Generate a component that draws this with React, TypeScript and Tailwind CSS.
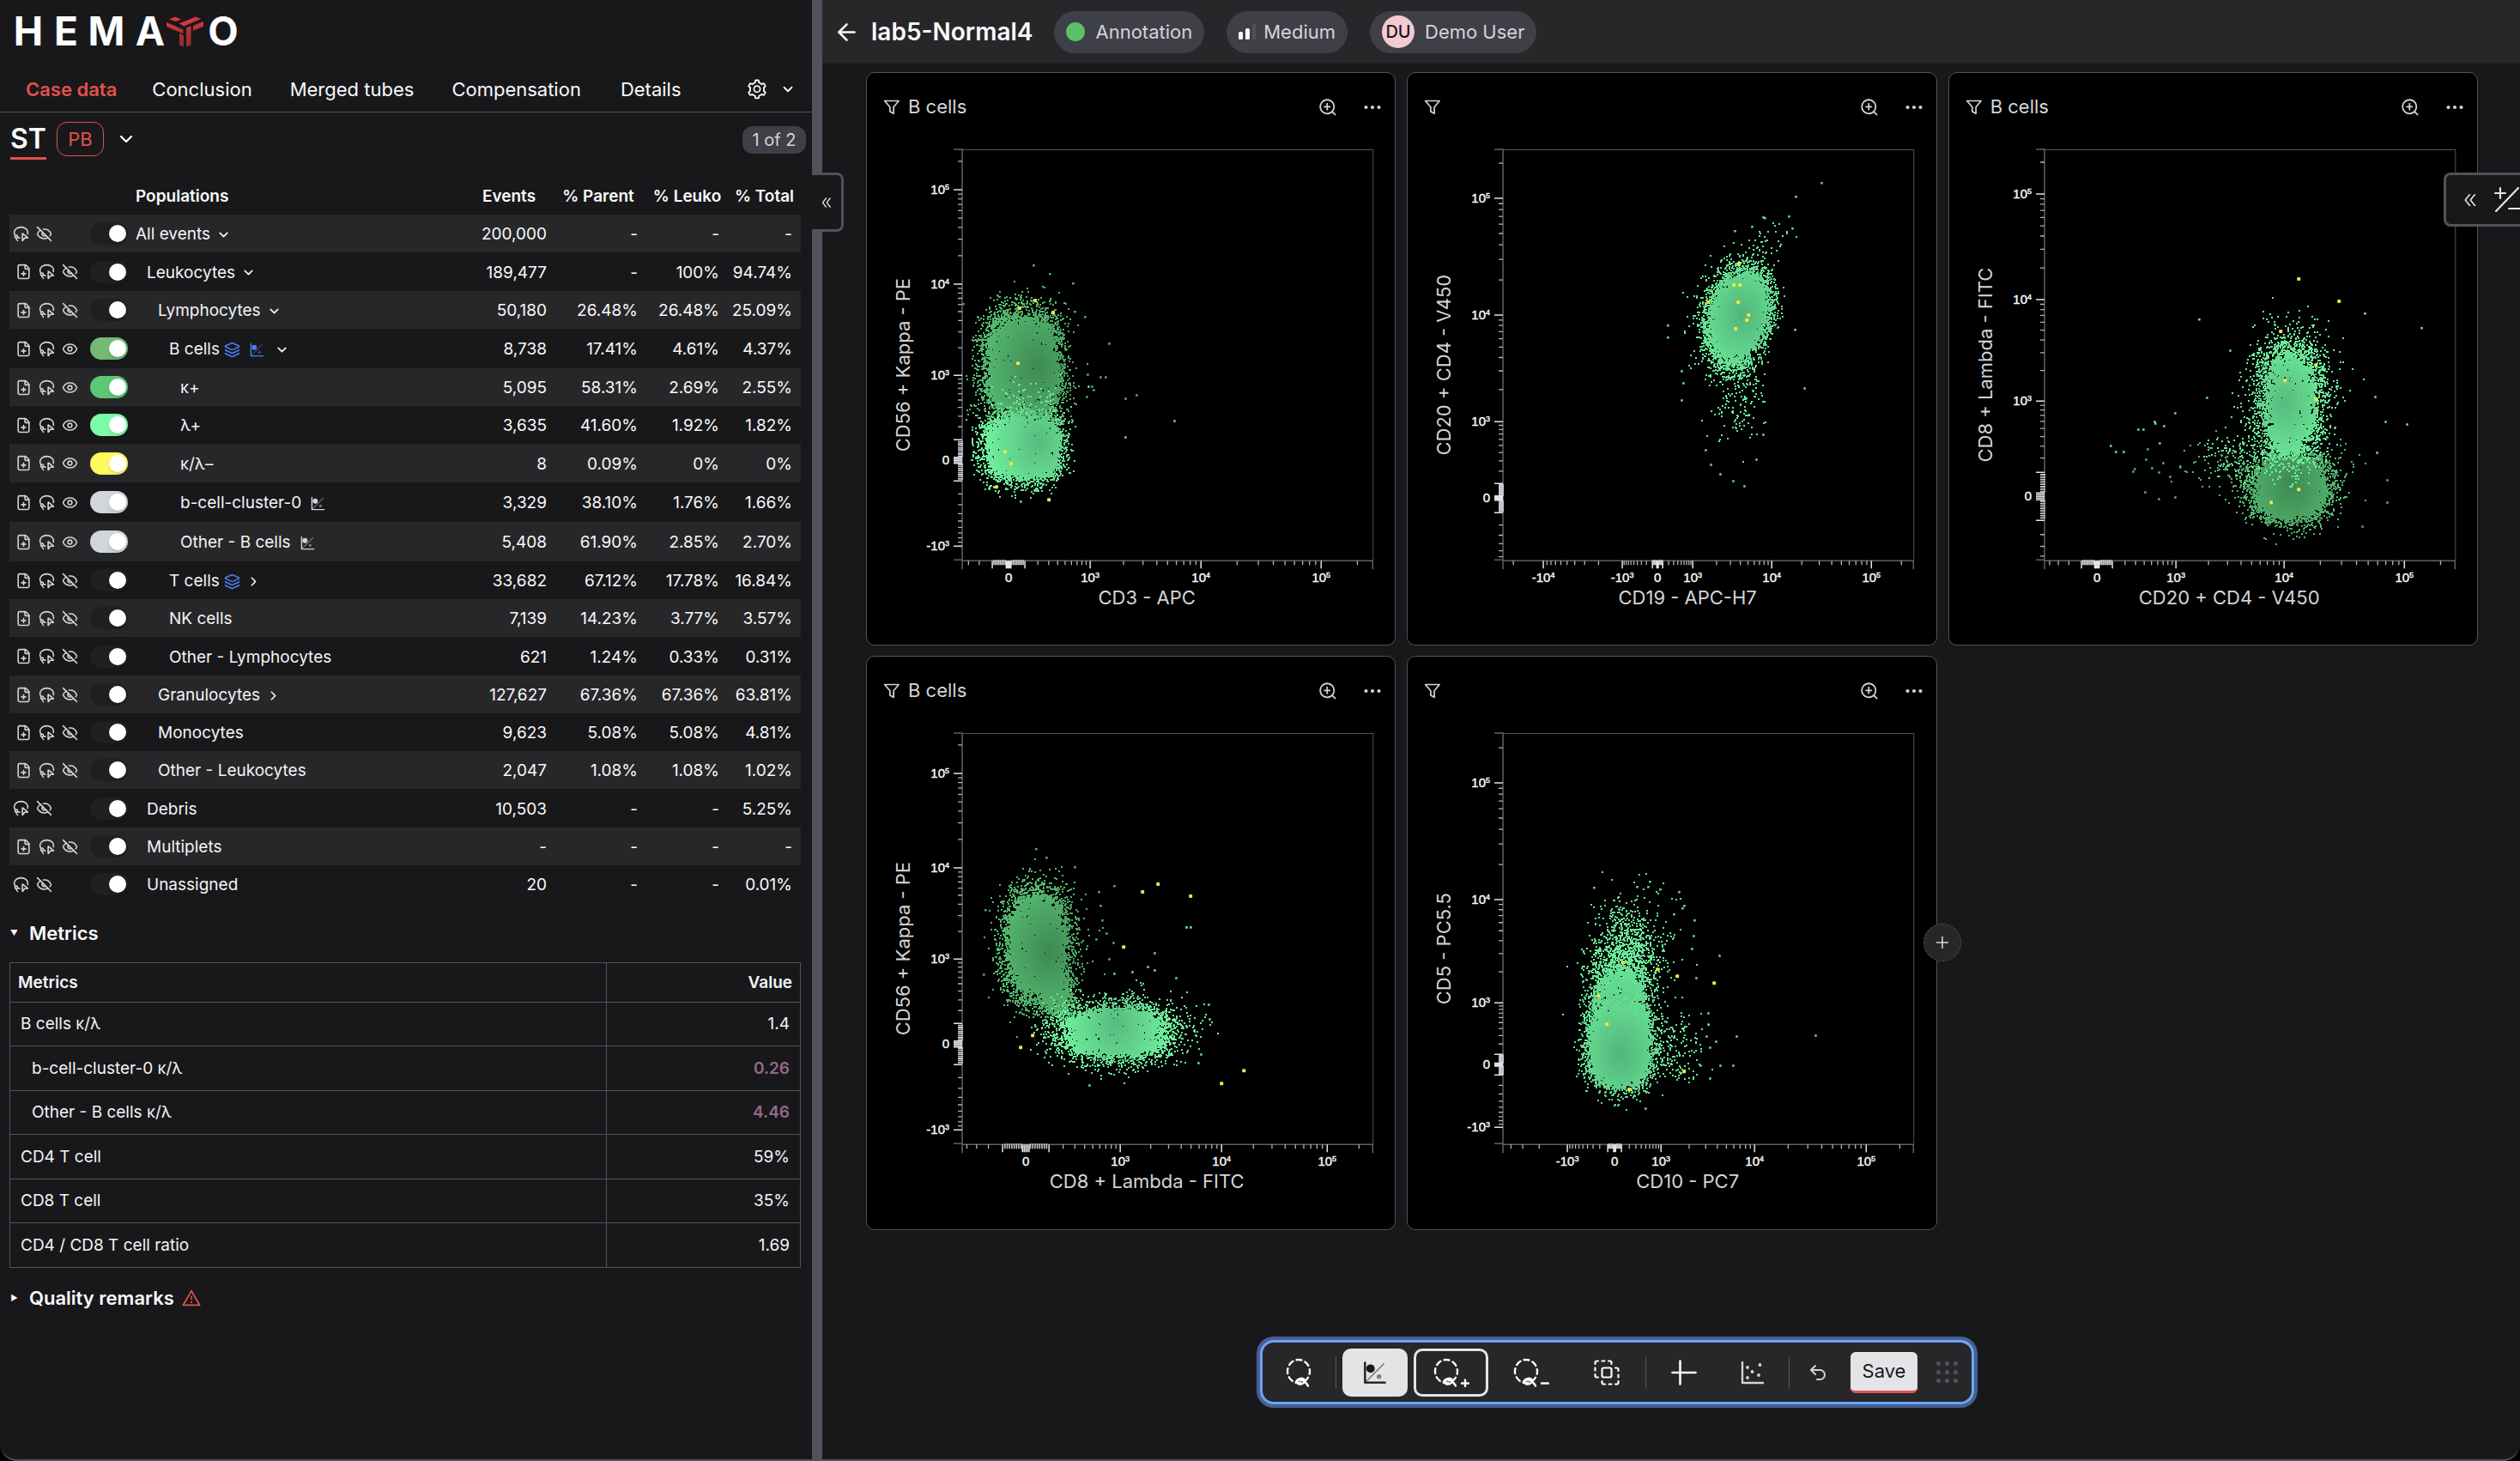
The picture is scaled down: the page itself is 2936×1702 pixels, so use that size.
import React from "react";
import { ArrowLeft, ChevronDown, ChevronRight, Eye, EyeOff, FilePlus, LassoSelect, Layers, Undo2 } from "lucide-react";
import { AiOutlineDoubleLeft, AiOutlineSetting, AiOutlineWarning, AiOutlineZoomIn } from "react-icons/ai";

/* ---------- icons ---------- */

function GateIcon({ className }: { className: string }) {
  return (
    <svg viewBox="0 0 24 24" className={className} fill="none" stroke="currentColor" aria-hidden="true">
      <path d="M2 2v20h20" strokeWidth="2" strokeLinecap="round" strokeLinejoin="round" />
      <path d="M3 21 21 3" strokeWidth="1.5" opacity="0.5" />
      <circle cx="7.500" cy="8" r="4.200" fill="currentColor" stroke="none" />
      <circle cx="16" cy="16" r="2.300" fill="currentColor" stroke="none" opacity="0.5" />
    </svg>
  );
}

function FunnelIcon() {
  return (
    <svg viewBox="0 0 20 20" className="size-5" fill="none" stroke="currentColor" strokeWidth="1.700" strokeLinejoin="round" aria-hidden="true">
      <path d="M1.700 2.500h16.400l-6 7.300v7.500l-4.200-2.200V9.800z" />
    </svg>
  );
}

function DotsIcon() {
  return (
    <svg viewBox="0 0 24 24" className="size-6" fill="currentColor" aria-hidden="true">
      <circle cx="4.500" cy="12" r="2.100" />
      <circle cx="12" cy="12" r="2.100" />
      <circle cx="19.500" cy="12" r="2.100" />
    </svg>
  );
}

function LassoIcon({ sign }: { sign?: "+" | "-" }) {
  return (
    <svg
      viewBox={sign ? "0 0 42 34" : "0 0 30 34"}
      className={sign ? "h-[34px] w-[42px]" : "h-[34px] w-[30px]"}
      fill="none"
      stroke="currentColor"
      strokeWidth="2.400"
      strokeLinecap="round"
      aria-hidden="true"
    >
      <ellipse cx="15" cy="15.500" rx="13" ry="13.500" strokeDasharray="6.500 4.800" strokeDashoffset="3" pathLength="90" />
      <path d="M12 28.500c0-3.500 7-6.500 9.500-3.500 2 3-2 6-5.500 5.500-4-.5-3.500-5 .5-5 5 0 7 3 9.500 7" />
      {sign && <path d="M33 29.500h8" />}
      {sign === "+" && <path d="M37 25.500v8" />}
    </svg>
  );
}

function BoxesIcon() {
  return (
    <svg viewBox="0 0 30 30" className="size-[30px]" fill="none" stroke="currentColor" strokeWidth="2.200" strokeLinecap="round" aria-hidden="true">
      <rect x="9.500" y="9.500" width="11" height="11" rx="2" />
      <path d="M1.500 5V3.500a2 2 0 0 1 2-2H5M9.500 1.500h3M17 1.500h1.500a2 2 0 0 1 2 2V5M1.500 9.500v3M1.500 17v1.500a2 2 0 0 0 2 2H5" />
      <path d="M25 9.500h1.500a2 2 0 0 1 2 2V13M28.500 17.500v3M28.500 25v1.500a2 2 0 0 1-2 2H25M20.500 28.500h-3M13 28.500h-1.500a2 2 0 0 1-2-2V25" />
    </svg>
  );
}

function ScatterIcon() {
  return (
    <svg viewBox="0 0 28 28" className="size-7 text-zinc-300" fill="none" stroke="currentColor" aria-hidden="true">
      <path d="M2 2v24h24" strokeWidth="2.400" strokeLinecap="round" strokeLinejoin="round" />
      <g fill="currentColor" stroke="none">
        <circle cx="8" cy="8" r="1.900" />
        <circle cx="22.500" cy="5" r="1.900" />
        <circle cx="13.500" cy="13" r="1.900" />
        <circle cx="21" cy="17" r="1.900" />
        <circle cx="8" cy="20" r="1.900" />
      </g>
    </svg>
  );
}

function Logo() {
  return (
    <svg viewBox="-6 -12 284 60" className="h-[60px] w-[284px]" role="img" aria-label="Hemato">
      <g fill="#ffffff" fontFamily="Inter, sans-serif" fontSize="46" fontWeight="700" textAnchor="middle">
        <text x="18" y="34">H</text>
        <text x="62" y="34">E</text>
        <text x="109" y="34">M</text>
        <text x="160" y="34">A</text>
        <text x="245" y="34">O</text>
      </g>
      <defs>
        <linearGradient id="mark" x1="0" y1="0" x2="0" y2="1">
          <stop offset="0" stopColor="#dc3640" />
          <stop offset="1" stopColor="#a03030" />
        </linearGradient>
        <linearGradient id="stem" gradientUnits="userSpaceOnUse" x1="0" y1="8" x2="0" y2="36">
          <stop offset="0" stopColor="#c4363c" />
          <stop offset="1" stopColor="#8a3026" />
        </linearGradient>
      </defs>
      <path d="M182 3.500l7-3 7 3-6 2.500z" fill="#dc3640" />
      <path d="M193.500 8.500 213 .5l6 2.500-19.500 8.500z" fill="#d83740" />
      <path d="M179 7v5l19.500 8.500v-5z" fill="url(#mark)" />
      <path d="M222 6v6l-12 5v-6z" fill="url(#mark)" />
      <path d="M202 13.500l5.500-2.500v22.500l-5.500 2z" fill="url(#stem)" />
      <path d="M194 20l5 2.500v13l-5-2z" fill="url(#stem)" />
    </svg>
  );
}

/* ---------- populations ---------- */

type Row = {
  name: string;
  depth: number;
  values: [string, string, string, string];
  height: string;
  file?: boolean;
  color?: string;
  layers?: boolean;
  gate?: "blue" | "gray";
  arrow?: "down" | "right";
};

const INDENT = ["pl-0", "pl-[13px]", "pl-[26px]", "pl-[39px]", "pl-[52px]"];

const ROWS: Row[] = [
  { name: "All events", depth: 0, values: ["200,000", "-", "-", "-"], height: "h-11", arrow: "down" },
  { name: "Leukocytes", depth: 1, values: ["189,477", "-", "100%", "94.74%"], height: "h-[45px]", file: true, arrow: "down" },
  { name: "Lymphocytes", depth: 2, values: ["50,180", "26.48%", "26.48%", "25.09%"], height: "h-11", file: true, arrow: "down" },
  { name: "B cells", depth: 3, values: ["8,738", "17.41%", "4.61%", "4.37%"], height: "h-[46px]", file: true, color: "bg-[#74b976]", layers: true, gate: "blue", arrow: "down" },
  { name: "κ+", depth: 4, values: ["5,095", "58.31%", "2.69%", "2.55%"], height: "h-11", file: true, color: "bg-[#5bc777]" },
  { name: "λ+", depth: 4, values: ["3,635", "41.60%", "1.92%", "1.82%"], height: "h-11", file: true, color: "bg-[#7dfca8]" },
  { name: "κ/λ–", depth: 4, values: ["8", "0.09%", "0%", "0%"], height: "h-[45px]", file: true, color: "bg-[#fffa5c]" },
  { name: "b-cell-cluster-0", depth: 4, values: ["3,329", "38.10%", "1.76%", "1.66%"], height: "h-[46px]", file: true, color: "bg-gray-300", gate: "gray" },
  { name: "Other - B cells", depth: 4, values: ["5,408", "61.90%", "2.85%", "2.70%"], height: "h-[46px]", file: true, color: "bg-gray-300", gate: "gray" },
  { name: "T cells", depth: 3, values: ["33,682", "67.12%", "17.78%", "16.84%"], height: "h-11", file: true, layers: true, arrow: "right" },
  { name: "NK cells", depth: 3, values: ["7,139", "14.23%", "3.77%", "3.57%"], height: "h-11", file: true },
  { name: "Other - Lymphocytes", depth: 3, values: ["621", "1.24%", "0.33%", "0.31%"], height: "h-[45px]", file: true },
  { name: "Granulocytes", depth: 2, values: ["127,627", "67.36%", "67.36%", "63.81%"], height: "h-11", file: true, arrow: "right" },
  { name: "Monocytes", depth: 2, values: ["9,623", "5.08%", "5.08%", "4.81%"], height: "h-11", file: true },
  { name: "Other - Leukocytes", depth: 2, values: ["2,047", "1.08%", "1.08%", "1.02%"], height: "h-11", file: true },
  { name: "Debris", depth: 1, values: ["10,503", "-", "-", "5.25%"], height: "h-[45px]" },
  { name: "Multiplets", depth: 1, values: ["-", "-", "-", "-"], height: "h-11", file: true },
  { name: "Unassigned", depth: 1, values: ["20", "-", "-", "0.01%"], height: "h-11" },
];

function PopulationRow({ row }: { row: Row }) {
  return (
    <tr className={`odd:bg-zinc-800 ${row.height}`}>
      <td className="p-0">
        <div className={`flex items-center gap-2 text-zinc-300 ${row.file ? "pl-[7px]" : "pl-1"}`}>
          {row.file && (
            <button aria-label={`Add ${row.name} to report`}>
              <FilePlus className="size-[19px]" strokeWidth={2} />
            </button>
          )}
          <button aria-label={`Select ${row.name}`}>
            <LassoSelect className="size-[19px]" strokeWidth={2} />
          </button>
          <button aria-label={`Toggle visibility of ${row.name}`}>
            {row.color ? <Eye className="size-[19px]" strokeWidth={2} /> : <EyeOff className="size-[19px]" strokeWidth={2} />}
          </button>
        </div>
      </td>
      <td className="p-0">
        <input
          type="checkbox"
          role="switch"
          defaultChecked={!!row.color}
          aria-label={`Colour ${row.name}`}
          className={`block h-[26px] w-11 appearance-none rounded-full before:mt-[3px] before:ml-[22px] before:block before:size-5 before:rounded-full before:bg-white before:shadow-md ${row.color ?? "bg-[#202021]"}`}
        />
      </td>
      <td className="p-0 pt-[2px]">
        <div className={`flex items-center text-zinc-100 ${INDENT[row.depth]}`}>
          <span>{row.name}</span>
          {row.layers && <Layers className="ml-[5px] size-[19px] text-[#4a7df0]" strokeWidth={2} />}
          {row.gate && <GateIcon className={`ml-[11px] size-[17px] ${row.gate === "blue" ? "text-[#4a7df0]" : "text-zinc-300"}`} />}
          {row.arrow && (
            <button aria-label={`Expand ${row.name}`} className={row.gate ? "ml-3" : "ml-[7px]"}>
              {row.arrow === "down" ? <ChevronDown className="size-[17px]" strokeWidth={2.4} /> : <ChevronRight className="size-[17px]" strokeWidth={2.4} />}
            </button>
          )}
        </div>
      </td>
      {row.values.map((v, i) => (
        <td key={i} className="p-0 pt-[2px] pr-[10px] text-right text-zinc-50">
          {v}
        </td>
      ))}
    </tr>
  );
}

function Populations() {
  return (
    <table className="w-full table-fixed border-collapse text-[19px] leading-6">
      <colgroup>
        <col className="w-[94px]" />
        <col className="w-[53px]" />
        <col />
        <col className="w-[108px]" />
        <col className="w-[106px]" />
        <col className="w-[95px]" />
        <col className="w-[85px]" />
      </colgroup>
      <thead>
        <tr className="h-11 text-zinc-50">
          <td />
          <td />
          <th scope="col" className="p-0 pt-[2px] text-left font-semibold">Populations</th>
          <th scope="col" className="p-0 pt-[2px] font-semibold">Events</th>
          <th scope="col" className="p-0 pt-[2px] pr-[6px] font-semibold">% Parent</th>
          <th scope="col" className="p-0 pt-[2px] font-semibold">% Leuko</th>
          <th scope="col" className="p-0 pt-[2px] font-semibold">% Total</th>
        </tr>
      </thead>
      <tbody>
        {ROWS.map((r) => (
          <PopulationRow key={r.name} row={r} />
        ))}
      </tbody>
    </table>
  );
}

/* ---------- metrics ---------- */

const METRICS = [
  { name: "B cells κ/λ", value: "1.4" },
  { name: "b-cell-cluster-0 κ/λ", value: "0.26", nested: true },
  { name: "Other - B cells κ/λ", value: "4.46", nested: true },
  { name: "CD4 T cell", value: "59%" },
  { name: "CD8 T cell", value: "35%" },
  { name: "CD4 / CD8 T cell ratio", value: "1.69" },
];

function Metrics() {
  return (
    <table className="w-full table-fixed border-collapse border border-zinc-600 text-[19px] leading-6 text-zinc-100">
      <colgroup>
        <col />
        <col className="w-[226px]" />
      </colgroup>
      <thead>
        <tr className="h-[46px]">
          <th scope="col" className="border border-zinc-600 px-[9px] py-0 text-left font-semibold">Metrics</th>
          <th scope="col" className="border border-zinc-600 px-[9px] py-0 text-right font-semibold">Value</th>
        </tr>
      </thead>
      <tbody>
        {METRICS.map((m) => (
          <tr key={m.name} className="h-[52px] odd:h-[51px]">
            <td className={`border border-zinc-600 py-0 ${m.nested ? "pl-[25px]" : "pl-3"}`}>{m.name}</td>
            <td className={`border border-zinc-600 px-3 py-0 text-right ${m.nested ? "font-semibold text-[#96688c]" : ""}`}>{m.value}</td>
          </tr>
        ))}
      </tbody>
    </table>
  );
}

/* ---------- sidebar ---------- */

function Sidebar() {
  return (
    <aside className="min-w-0">
      <div className="h-[76px] pt-[7px] pl-[9px]">
        <Logo />
      </div>
      <nav className="flex h-[55px] items-center border-b border-zinc-600 pt-[2px] pr-[19px] pl-[30px] text-[22px] text-zinc-50">
        <a href="#case" className="font-semibold text-[#e2514b]">Case data</a>
        <a href="#conclusion" className="ml-[41px]">Conclusion</a>
        <a href="#tubes" className="ml-11">Merged tubes</a>
        <a href="#compensation" className="ml-11">Compensation</a>
        <a href="#details" className="ml-[46px]">Details</a>
        <button aria-label="Settings" className="ml-auto flex items-center gap-[14px]">
          <AiOutlineSetting className="size-[26px]" />
          <ChevronDown className="size-[18px]" strokeWidth={2.4} />
        </button>
      </nav>
      <div className="flex h-[75px] items-start pt-[11px] pr-[7px] pl-3">
        <h2 className="h-11 border-b-3 border-[#e2514b] text-[32px] leading-10 font-semibold text-white">ST</h2>
        <button className="ml-3 flex items-center">
          <span className="flex h-10 w-[55px] items-center justify-center rounded-xl border border-[#e2514b] text-[22px] text-[#e2514b]">PB</span>
          <ChevronDown className="ml-[14px] size-6 text-zinc-50" strokeWidth={2.3} />
        </button>
        <span className="mt-[5px] ml-auto flex h-8 w-[74px] items-center justify-center rounded-xl bg-zinc-700 text-[20px] text-zinc-300">1 of 2</span>
      </div>
      <div className="pr-[13px] pl-[11px]">
        <Populations />
        <details open className="pt-[19px]">
          <summary className="flex h-8 list-none items-center gap-3 text-[22px] font-semibold text-zinc-50">
            <span className="w-[11px] text-center text-[9px]">▼</span>Metrics
          </summary>
          <div className="pt-[18px]">
            <Metrics />
          </div>
        </details>
        <details className="pt-[19px]">
          <summary className="flex h-8 list-none items-center gap-3 text-[22px] font-semibold text-zinc-50">
            <span className="w-[11px] text-center text-[9px]">▶</span>
            <span className="flex items-center gap-2">
              Quality remarks
              <AiOutlineWarning className="size-6 text-[#e2514b]" />
            </span>
          </summary>
        </details>
      </div>
    </aside>
  );
}

/* ---------- plots ---------- */

type Axis = {
  title: string;
  zero: number;
  /* pixel positions of 100, 10³, 10⁴, 10⁵ and, where labelled, -10³ and -10⁴ */
  h: number;
  k1: number;
  k4: number;
  k5: number;
  nk1?: number;
  nk4?: number;
};

type Tone = "kappa" | "lambda" | "mix";

type Cluster = {
  n: number;
  x: number;
  y: number;
  rx: number;
  ry: number;
  sx: number;
  sy: number;
  p?: number;
  tilt?: number;
  dark?: [number, number, number];
  tone: Tone;
};

type Plot = {
  label?: string;
  xAxis: Axis;
  yAxis: Axis;
  clusters: Cluster[];
  dots: { tone: Tone; at: [number, number][] }[];
  marked: [number, number][];
};

const LEFT = 112;
const RIGHT = 590;
const TOP = 90;
const BOTTOM = 569;

const TONES: Record<Tone, [number[], number[]]> = {
  kappa: [[64, 140, 84], [84, 184, 112]],
  lambda: [[88, 190, 128], [110, 238, 156]],
  mix: [[84, 184, 125], [106, 232, 152]],
};
const LEVELS = 12;

function shade(tone: Tone, level: number) {
  const [a, b] = TONES[tone];
  const t = level / (LEVELS - 1);
  return `rgb(${a.map((v, i) => Math.round(v + (b[i] - v) * t)).join(",")})`;
}

function makeRandom(seed: number) {
  let s = seed;
  return () => {
    s = (s + 0x6d2b79f5) | 0;
    let t = Math.imul(s ^ (s >>> 15), 1 | s);
    t = (t + Math.imul(t ^ (t >>> 7), 61 | t)) ^ t;
    return ((t ^ (t >>> 14)) >>> 0) / 4294967296;
  };
}

function clusterPaths(c: Cluster, rand: () => number) {
  const gauss = () => Math.sqrt(-2 * Math.log(1 - rand())) * Math.cos(2 * Math.PI * rand());
  const p = c.p ?? 2;
  const paths: string[] = Array(LEVELS).fill("");
  for (let i = 0; i < c.n; i++) {
    let u = 0;
    let v = 0;
    do {
      u = rand() * 2 - 1;
      v = rand() * 2 - 1;
    } while (Math.abs(u) ** p + Math.abs(v) ** p > 1);
    const dx = u * c.rx + gauss() * c.sx;
    const dy = v * c.ry + gauss() * c.sy;
    const x = Math.round(c.x + dx - dy * (c.tilt ?? 0));
    const y = Math.round(c.y + dy);
    if (x < LEFT + 1 || x > RIGHT - 3 || y < TOP + 1 || y > BOTTOM - 3) continue;
    const level = c.dark
      ? Math.min(LEVELS - 1, Math.floor((Math.hypot(x - c.dark[0], (y - c.dark[1]) * 0.75) / c.dark[2]) * LEVELS))
      : LEVELS - 1;
    const core = c.dark && Math.abs(dx / c.rx) ** p + Math.abs(dy / c.ry) ** p < 0.5 + rand() * 0.7;
    paths[level] += core ? `M${x} ${y}h3v3h-3z` : `M${x} ${y}h2v2h-2z`;
  }
  return paths;
}

function axisTicks(a: Axis, lo: number, hi: number) {
  const minor: number[] = [];
  const dense: number[] = [];
  const major: number[] = [];
  const half = Math.abs(a.h - a.zero);
  const nh = 2 * a.zero - a.h;
  const nk1 = a.nk1 ?? 2 * a.zero - a.k1;
  const nk4 = a.nk4 ?? nk1 - (a.k4 - a.k1);
  const C = 257;
  const frac = (m: number) => (Math.asinh((m * 100) / C) - Math.asinh(100 / C)) / (Math.asinh(1000 / C) - Math.asinh(100 / C));
  for (let m = 2; m < 10; m++) {
    minor.push(a.h + (a.k1 - a.h) * frac(m));
    minor.push(nh + (nk1 - nh) * frac(m));
    minor.push(a.k1 + (a.k4 - a.k1) * Math.log10(m));
    minor.push(a.k4 + (a.k5 - a.k4) * Math.log10(m));
    minor.push(a.k5 + (a.k5 - a.k4) * Math.log10(m));
    minor.push(nk1 + (nk4 - nk1) * Math.log10(m));
    minor.push(nk4 - (a.k5 - a.k4) * Math.log10(m));
    dense.push(a.zero + (half * m) / 10, a.zero - (half * m) / 10);
  }
  major.push(a.h, nh, a.k1, a.k4, a.k5, a.zero, nk1, nk4);
  for (let m = 1; m <= 2; m++) major.push(a.zero + (half * m) / 14, a.zero - (half * m) / 14);
  const inside = (v: number) => v > lo && v < hi;
  return { minor: minor.filter(inside), dense: dense.filter(inside), major: major.filter(inside) };
}

function TickLabel({ x, y, power, negative, end }: { x: number; y: number; power?: number; negative?: boolean; end?: boolean }) {
  return (
    <text x={x} y={y} textAnchor={end ? "end" : "middle"} fontSize="15" fill="#fafafa" stroke="#fafafa" strokeWidth="0.4" fontFamily="'Liberation Sans', Arial, sans-serif">
      {power === undefined ? "0" : `${negative ? "-" : ""}10`}
      {power !== undefined && (
        <tspan fontSize="9" dy="-5">
          {power}
        </tspan>
      )}
    </text>
  );
}

function PlotDrawing({ plot, seed }: { plot: Plot; seed: number }) {
  const rand = makeRandom(seed);
  const { xAxis, yAxis } = plot;
  const xt = axisTicks(xAxis, LEFT, RIGHT);
  const yt = axisTicks(yAxis, TOP, BOTTOM);
  return (
    <svg viewBox="1 81 615 586" className="block w-full" role="img" aria-label={`${xAxis.title} against ${yAxis.title}`}>
      {plot.dots.map((d, i) => (
        <path key={`d${i}`} fill={shade(d.tone, LEVELS - 2)} d={d.at.map(([x, y]) => `M${x - 1} ${y - 1}h2.500v2.500h-2.500z`).join("")} />
      ))}
      {plot.clusters.map((c, i) =>
        clusterPaths(c, rand)
          .map((d, level) => ({ d, level }))
          .reverse()
          .map(({ d, level }) => <path key={`${i}-${level}`} fill={shade(c.tone, level)} d={d} shapeRendering="crispEdges" />),
      )}
      {plot.marked.map(([x, y], i) => (
        <rect key={i} x={x - 2} y={y - 2} width="4" height="4" rx="1" fill="#f2e63c" />
      ))}
      <path d={`M${LEFT} ${TOP + 0.5}H${RIGHT + 0.5}V${BOTTOM}`} fill="none" stroke="#52525b" />
      <path d={`M${LEFT - 10} ${TOP}H${LEFT}V${BOTTOM}M${LEFT - 10} ${BOTTOM - 1}H${LEFT}M${LEFT} ${BOTTOM + 10}V${BOTTOM}H${RIGHT}v10`} fill="none" stroke="#606064" strokeWidth="1.500" />
      <path d={yt.minor.map((v) => `M${LEFT - 5} ${v}h5`).join("")} stroke="#b4b4ba" strokeWidth="1.300" />
      <path d={xt.minor.map((v) => `M${v} ${BOTTOM}v5`).join("")} stroke="#b4b4ba" strokeWidth="1.300" />
      <path d={yt.dense.map((v) => `M${LEFT - 5} ${v}h6`).join("")} stroke="#c4c4ca" strokeWidth="1.800" />
      <path d={xt.dense.map((v) => `M${v} ${BOTTOM - 1}v6`).join("")} stroke="#c4c4ca" strokeWidth="1.600" />
      <path d={yt.major.map((v) => `M${LEFT - 10} ${v}h10`).join("")} stroke="#e4e4e7" strokeWidth="1.500" />
      <path d={xt.major.map((v) => `M${v} ${BOTTOM}v9`).join("")} stroke="#e4e4e7" strokeWidth="1.500" />
      <TickLabel x={97} y={yAxis.zero + 5} end />
      <TickLabel x={97} y={yAxis.k1 + 5} power={3} end />
      <TickLabel x={97} y={yAxis.k4 + 5} power={4} end />
      <TickLabel x={97} y={yAxis.k5 + 5} power={5} end />
      {yAxis.nk1 && <TickLabel x={97} y={yAxis.nk1 + 5} power={3} negative end />}
      <TickLabel x={xAxis.zero} y={594} />
      <TickLabel x={xAxis.k1} y={594} power={3} />
      <TickLabel x={xAxis.k4} y={594} power={4} />
      <TickLabel x={xAxis.k5} y={594} power={5} />
      {xAxis.nk1 && <TickLabel x={xAxis.nk1} y={594} power={3} negative />}
      {xAxis.nk4 && <TickLabel x={xAxis.nk4} y={594} power={4} negative />}
      <g fill="#d4d4d8" fontSize="22" textAnchor="middle" fontFamily="Inter, sans-serif">
        <text x="327" y="620">{xAxis.title}</text>
        <text x="51" y="341" transform="rotate(-90 51 341)">{yAxis.title}</text>
      </g>
    </svg>
  );
}

const KAPPA_Y: Axis = { title: "CD56 + Kappa - PE", zero: 452, h: 428, k1: 353, k4: 247, k5: 137, nk1: 552 };

const PLOTS: Plot[] = [
  {
    label: "B cells",
    xAxis: { title: "CD3 - APC", zero: 166, h: 185, k1: 261, k4: 390, k5: 530 },
    yAxis: KAPPA_Y,
    clusters: [
      { n: 120, x: 182, y: 380, rx: 62, ry: 95, sx: 8, sy: 10, tone: "kappa" },
      { n: 5000, x: 182, y: 342, rx: 43, ry: 60, sx: 10, sy: 17, p: 3.2, dark: [198, 343, 64], tone: "kappa" },
      { n: 80, x: 184, y: 388, rx: 42, ry: 24, sx: 6, sy: 10, tone: "lambda" },
      { n: 3600, x: 182, y: 437, rx: 43, ry: 36, sx: 10, sy: 10, p: 3.2, dark: [200, 428, 60], tone: "lambda" },
    ],
    dots: [
      { tone: "kappa", at: [[195, 225], [214, 235], [241, 246], [113, 270], [153, 260], [255, 285], [283, 316], [243, 279], [258, 352], [273, 355], [279, 355], [263, 366], [265, 370], [257, 378], [315, 376], [302, 380]] },
      { tone: "lambda", at: [[359, 406], [302, 425], [259, 366], [180, 500]] },
    ],
    marked: [[197, 266], [179, 275], [218, 280], [177, 339], [162, 442], [169, 456], [152, 483], [213, 498]],
  },
  {
    xAxis: { title: "CD19 - APC-H7", zero: 292, h: 298, k1: 333, k4: 425, k5: 541, nk1: 251, nk4: 159 },
    yAxis: { title: "CD20 + CD4 - V450", zero: 496, h: 479, k1: 407, k4: 283, k5: 147 },
    clusters: [
      { n: 130, x: 383, y: 380, rx: 14, ry: 50, sx: 13, sy: 14, tone: "mix" },
      { n: 80, x: 402, y: 215, rx: 8, ry: 26, sx: 12, sy: 12, tilt: 0.7, tone: "mix" },
      { n: 450, x: 370, y: 290, rx: 22, ry: 40, sx: 14, sy: 24, tone: "mix" },
      { n: 120, x: 385, y: 345, rx: 16, ry: 14, sx: 12, sy: 12, tone: "mix" },
      { n: 7600, x: 386, y: 283, rx: 26, ry: 44, sx: 11, sy: 14, tilt: 0.15, dark: [390, 282, 58], tone: "mix" },
    ],
    dots: [
      { tone: "mix", at: [[483, 129], [453, 145], [445, 168], [449, 182], [415, 169], [417, 170], [402, 180], [382, 185], [304, 295], [304, 309], [320, 348], [322, 362], [320, 382], [452, 300], [463, 368], [415, 422], [407, 451], [393, 482], [380, 476], [365, 468], [354, 457], [348, 440]] },
    ],
    marked: [[387, 223], [381, 248], [388, 248], [351, 268], [386, 268], [398, 283], [396, 289], [383, 299]],
  },
  {
    label: "B cells",
    xAxis: { title: "CD20 + CD4 - V450", zero: 173, h: 191, k1: 265, k4: 391, k5: 531 },
    yAxis: { title: "CD8 + Lambda - FITC", zero: 494, h: 466, k1: 383, k4: 265, k5: 142 },
    clusters: [
      { n: 150, x: 335, y: 462, rx: 45, ry: 24, sx: 18, sy: 12, tone: "kappa" },
      { n: 160, x: 415, y: 470, rx: 60, ry: 50, sx: 14, sy: 10, tone: "kappa" },
      { n: 4800, x: 397, y: 483, rx: 39, ry: 35, sx: 12, sy: 10, p: 2.8, dark: [398, 478, 60], tone: "kappa" },
      { n: 600, x: 400, y: 368, rx: 50, ry: 78, sx: 14, sy: 16, tone: "lambda" },
      { n: 90, x: 345, y: 445, rx: 40, ry: 22, sx: 12, sy: 10, tone: "lambda" },
      { n: 3300, x: 397, y: 384, rx: 29, ry: 60, sx: 12, sy: 18, p: 2.8, dark: [391, 384, 60], tone: "lambda" },
    ],
    dots: [
      { tone: "lambda", at: [[189, 435], [195, 442], [204, 442], [221, 416], [227, 416], [240, 407], [241, 409], [251, 412], [246, 432], [264, 397], [292, 288], [301, 379], [551, 298], [485, 281], [497, 378], [509, 407], [534, 410], [499, 443], [328, 324]] },
      { tone: "kappa", at: [[230, 451], [232, 439], [215, 465], [217, 462], [237, 461], [229, 489], [245, 497], [264, 495], [511, 475], [511, 501], [482, 529], [250, 455], [245, 466], [270, 460], [258, 471]] },
    ],
    marked: [[408, 241], [455, 267], [387, 302], [428, 341], [392, 359], [428, 381], [408, 486], [376, 501]],
  },
  {
    label: "B cells",
    xAxis: { title: "CD8 + Lambda - FITC", zero: 186, h: 213, k1: 296, k4: 414, k5: 537 },
    yAxis: KAPPA_Y,
    clusters: [
      { n: 160, x: 205, y: 340, rx: 50, ry: 85, sx: 14, sy: 12, tone: "kappa" },
      { n: 700, x: 220, y: 392, rx: 18, ry: 26, sx: 8, sy: 12, p: 3, dark: [212, 343, 64], tone: "kappa" },
      { n: 4300, x: 198, y: 336, rx: 34, ry: 60, sx: 10, sy: 15, p: 2.8, dark: [212, 343, 60], tone: "kappa" },
      { n: 240, x: 300, y: 430, rx: 74, ry: 40, sx: 18, sy: 10, tone: "lambda" },
      { n: 3400, x: 290, y: 438, rx: 59, ry: 29, sx: 19, sy: 10, p: 2.8, dark: [290, 426, 62], tone: "lambda" },
    ],
    dots: [
      { tone: "kappa", at: [[198, 225], [210, 235], [243, 246], [139, 296], [137, 371], [271, 275], [289, 268], [273, 291], [275, 308], [280, 323], [268, 330], [288, 334], [283, 353]] },
      { tone: "lambda", at: [[373, 316], [378, 316], [336, 346], [328, 362], [336, 366], [310, 368], [361, 375], [289, 370], [260, 500], [399, 406], [400, 423], [390, 464], [387, 474]] },
    ],
    marked: [[340, 266], [322, 275], [378, 280], [300, 339], [180, 456], [194, 442], [414, 498], [440, 483]],
  },
  {
    xAxis: { title: "CD10 - PC7", zero: 242, h: 250, k1: 296, k4: 405, k5: 535, nk1: 187 },
    yAxis: { title: "CD5 - PC5.5", zero: 476, h: 464, k1: 404, k4: 284, k5: 148, nk1: 549 },
    clusters: [
      { n: 180, x: 310, y: 460, rx: 28, ry: 36, sx: 14, sy: 12, tone: "mix" },
      { n: 200, x: 264, y: 340, rx: 38, ry: 50, sx: 16, sy: 24, tone: "mix" },
      { n: 900, x: 254, y: 350, rx: 30, ry: 44, sx: 12, sy: 18, tone: "mix" },
      { n: 1900, x: 247, y: 404, rx: 30, ry: 38, sx: 11, sy: 18, p: 3, dark: [250, 460, 90], tone: "mix" },
      { n: 5500, x: 247, y: 455, rx: 34, ry: 44, sx: 8, sy: 10, p: 3.2, dark: [248, 462, 62], tone: "mix" },
    ],
    dots: [
      { tone: "mix", at: [[218, 270], [283, 263], [281, 269], [268, 269], [295, 272], [317, 275], [323, 291], [321, 294], [335, 308], [334, 326], [332, 341], [311, 301], [364, 349], [337, 375], [351, 416], [351, 429], [349, 443], [384, 443], [476, 442], [360, 449], [353, 456], [380, 477], [365, 477], [353, 492], [342, 477], [278, 527]] },
    ],
    marked: [[252, 357], [292, 365], [315, 373], [358, 381], [223, 396], [233, 429], [323, 484], [260, 505]],
  },
];

function PlotCard({ plot, seed, last }: { plot: Plot; seed: number; last: boolean }) {
  return (
    <section className="relative rounded-[10px] border border-zinc-600 bg-black text-zinc-300">
      <div className="flex h-20 items-center pr-[14px] pb-px pl-[19px] text-[22px]">
        <button aria-label="Filter population" className="flex items-center gap-[9px]">
          <FunnelIcon />
          {plot.label}
        </button>
        <button aria-label="Zoom in" className="ml-auto">
          <AiOutlineZoomIn className="size-6" />
        </button>
        <button aria-label="More actions" className="ml-7">
          <DotsIcon />
        </button>
      </div>
      <PlotDrawing plot={plot} seed={seed} />
      {last && (
        <button
          aria-label="Add plot"
          className="absolute top-1/2 -right-[29px] flex size-11 -translate-y-1/2 items-center justify-center rounded-full border border-dashed border-zinc-600 bg-zinc-800"
        >
          <svg viewBox="0 0 14 14" className="size-[14px]" stroke="currentColor" strokeWidth="1.600" aria-hidden="true">
            <path d="M7 0v14M0 7h14" />
          </svg>
        </button>
      )}
    </section>
  );
}

/* ---------- workspace ---------- */

function TopBar() {
  return (
    <header className="flex h-[74px] items-center bg-zinc-800 pl-[13px] text-[22px] text-zinc-300">
      <a href="#cases" aria-label="Back" className="text-zinc-50">
        <ArrowLeft className="size-[31px]" strokeWidth={2} />
      </a>
      <h1 className="ml-[13px] text-[28px] font-semibold text-zinc-50">lab5-Normal4</h1>
      <span className="ml-[25px] flex h-[49px] items-center gap-3 rounded-full bg-zinc-700 px-[14px]">
        <span className="size-[22px] rounded-full bg-[#5cc067]" />
        Annotation
      </span>
      <span className="ml-[26px] flex h-[49px] items-center gap-[9px] rounded-full bg-zinc-700 px-[14px]">
        <svg viewBox="0 0 20 20" className="size-5" aria-hidden="true">
          <rect x="0" y="10" width="5" height="9" rx="1.500" fill="#fafafa" />
          <rect x="8" y="6" width="5" height="13" rx="1.500" fill="#fafafa" />
          <rect x="16" y="1" width="4" height="18" rx="1.500" fill="#52525b" />
        </svg>
        Medium
      </span>
      <span className="ml-[26px] flex h-[49px] items-center gap-3 rounded-full bg-zinc-700 px-[14px]">
        <span className="flex size-[38px] items-center justify-center rounded-full bg-[#f4c9d2] text-[20px] font-medium text-zinc-900">DU</span>
        Demo User
      </span>
    </header>
  );
}

function Divider() {
  return <span className="h-[38px] w-px bg-zinc-600" />;
}

function Toolbar() {
  return (
    <div
      role="toolbar"
      aria-label="Gating tools"
      className="absolute bottom-16 left-[510px] flex h-[75px] items-center gap-[7px] rounded-2xl border-3 border-[#6ea4f7] bg-zinc-800 pr-4 pl-[6px] text-zinc-50 ring-4 ring-[#466092]"
    >
      <button aria-label="Lasso" className="flex h-14 w-[72px] items-center justify-center">
        <LassoIcon />
      </button>
      <Divider />
      <button aria-label="Cluster gate" className="flex h-14 w-[76px] items-center justify-center rounded-[10px] bg-zinc-200 text-zinc-900">
        <GateIcon className="size-7" />
      </button>
      <button aria-label="Add to selection" className="flex h-14 w-[87px] items-center justify-center rounded-[10px] border-3 border-zinc-200">
        <LassoIcon sign="+" />
      </button>
      <button aria-label="Remove from selection" className="flex h-14 w-[86px] items-center justify-center">
        <LassoIcon sign="-" />
      </button>
      <button aria-label="Box selection" className="flex h-14 w-[76px] items-center justify-center">
        <BoxesIcon />
      </button>
      <Divider />
      <button aria-label="Quadrant gate" className="flex h-14 w-[74px] items-center justify-center">
        <svg viewBox="0 0 30 30" className="size-[30px]" stroke="currentColor" strokeWidth="2.600" strokeLinecap="round" aria-hidden="true">
          <path d="M10.500 1.500v27M1.500 15h27" />
        </svg>
      </button>
      <button aria-label="Scatter plot" className="flex h-14 w-[71px] items-center justify-center">
        <ScatterIcon />
      </button>
      <Divider />
      <button aria-label="Undo" className="flex h-14 w-[52px] items-center justify-center text-zinc-300">
        <Undo2 className="size-6" strokeWidth={2} />
      </button>
      <button className="ml-[5px] h-12 w-[78px] rounded-md border-b-3 border-[#dc5550] bg-zinc-200 text-[22px] text-zinc-900">Save</button>
      <span className="ml-[15px] grid grid-cols-3 gap-[5px]">
        {Array.from({ length: 9 }, (_, i) => (
          <span key={i} className="size-[5px] rounded-full bg-zinc-600" />
        ))}
      </span>
    </div>
  );
}

export default function App() {
  return (
    <div className="min-h-screen bg-black font-['Inter',sans-serif]">
      <div className="relative grid min-h-screen grid-cols-[minmax(0,946fr)_12px_minmax(0,1978fr)] overflow-hidden rounded-b-[20px] border-b-2 border-zinc-600 bg-zinc-900">
        <Sidebar />
        <div className="relative bg-zinc-600">
          <button
            aria-label="Collapse sidebar"
            className="absolute top-[201px] left-0 z-10 flex h-[69px] w-[37px] items-center justify-center rounded-r-lg border-3 border-l-0 border-zinc-600 bg-zinc-900 text-zinc-100"
          >
            <AiOutlineDoubleLeft className="size-4" />
          </button>
        </div>
        <main className="relative min-w-0">
          <TopBar />
          <div className="grid grid-cols-3 gap-x-[13px] gap-y-3 pt-[10px] pr-[49px] pl-[51px]">
            {PLOTS.map((p, i) => (
              <PlotCard key={i} plot={p} seed={i * 977 + 11} last={i === PLOTS.length - 1} />
            ))}
          </div>
          <button
            aria-label="Open comparison panel"
            className="absolute top-[201px] right-0 flex h-[63px] w-[89px] items-center gap-[18px] rounded-l-lg border-3 border-r-0 border-zinc-600 bg-zinc-900 pl-[18px] text-zinc-200"
          >
            <AiOutlineDoubleLeft className="size-5 shrink-0" />
            <svg viewBox="0 0 31 31" className="size-[31px] shrink-0" stroke="currentColor" strokeWidth="2.200" strokeLinecap="round" aria-hidden="true">
              <path d="M2 29 28 2M1 8h12M7 2v12M17 26h13" />
            </svg>
          </button>
          <Toolbar />
        </main>
      </div>
    </div>
  );
}
